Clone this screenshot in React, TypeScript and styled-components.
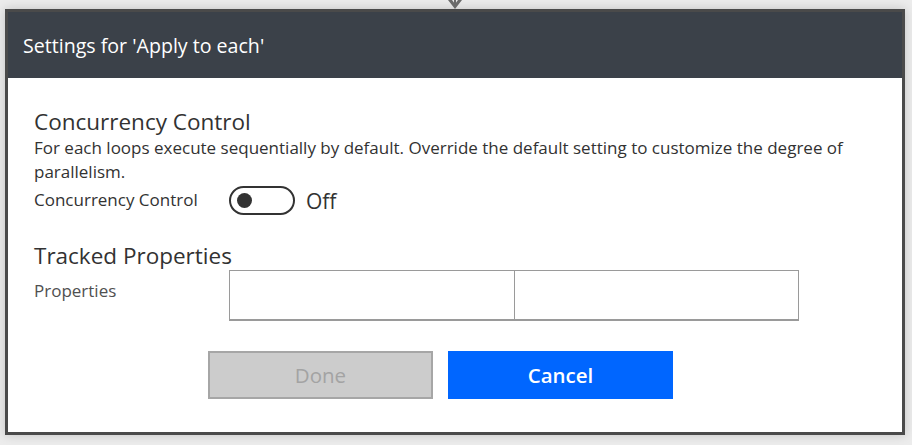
import React from "react";
import styled, { createGlobalStyle } from "styled-components";

const Global = createGlobalStyle`
  html, body { margin: 0; padding: 0; }
  body {
    background: #ececec;
    font-family: "Open Sans", "Noto Sans", sans-serif;
    width: 912px;
    height: 445px;
    overflow: hidden;
  }
`;

const Page = styled.div`
  position: relative;
  width: 912px;
  height: 445px;
  padding: 9px 7px 10px 5px;
  box-sizing: border-box;
`;

const Connector = styled.svg`
  position: absolute;
  left: 447px;
  top: 0;
`;

const Dialog = styled.div`
  width: 900px;
  height: 426px;
  box-sizing: border-box;
  border: 3px solid #4a4a4a;
  background: #fff;
  box-shadow: 0 0 10px rgba(0, 0, 0, 0.18);
  display: flex;
  flex-direction: column;
`;

const Header = styled.div`
  height: 66px;
  flex: none;
  background: #3b4149;
  display: flex;
  align-items: center;
  padding-left: 15px;
  box-sizing: border-box;
  color: #ffffff;
  font-size: 19.6px;
`;

const Body = styled.div`
  padding: 30px 26px 0 26px;
  color: #333;
`;

const SectionTitle = styled.div<{ $top?: number }>`
  font-size: 22.5px;
  line-height: 28px;
  color: #323232;
  margin-top: ${(p) => p.$top ?? 0}px;
`;

const Description = styled.div`
  font-size: 17px;
  line-height: 24px;
  color: #323232;
  width: 840px;
`;

const Row = styled.div<{ $align?: string; $top?: number }>`
  display: flex;
  align-items: ${(p) => p.$align ?? "center"};
  margin-top: ${(p) => p.$top ?? 0}px;
`;

const Label = styled.div<{ $color?: string; $top?: number }>`
  width: 195px;
  flex: none;
  font-size: 17px;
  line-height: 24px;
  color: ${(p) => p.$color ?? "#323232"};
  margin-top: ${(p) => p.$top ?? 0}px;
`;

const Toggle = styled.div`
  width: 66px;
  height: 29px;
  box-sizing: border-box;
  border: 2px solid #333;
  border-radius: 15px;
  display: flex;
  align-items: center;
  padding-left: 6px;
`;

const Knob = styled.div`
  width: 15px;
  height: 15px;
  border-radius: 50%;
  background: #333;
`;

const ToggleText = styled.span`
  font-size: 21px;
  line-height: 29px;
  color: #323232;
  margin-left: 11px;
  margin-top: 3px;
`;

const PropGrid = styled.div`
  display: flex;
`;

const PropCell = styled.div<{ $w: number; $first?: boolean }>`
  width: ${(p) => p.$w}px;
  height: 51px;
  box-sizing: border-box;
  border: 1px solid #9a9a9a;
  border-bottom-width: 2px;
  ${(p) => (p.$first ? "border-right: none;" : "")}
`;

const Buttons = styled.div`
  display: flex;
  gap: 15px;
  padding-left: 174px;
  margin-top: 30px;
`;

const Button = styled.button<{ $primary?: boolean }>`
  width: 225px;
  height: 48px;
  box-sizing: border-box;
  font-family: "Open Sans", "Noto Sans", sans-serif;
  font-size: 20.5px;
  font-weight: ${(p) => (p.$primary ? 600 : 400)};
  border: ${(p) => (p.$primary ? "none" : "2px solid #a6a6a6")};
  background: ${(p) => (p.$primary ? "#0066ff" : "#cccccc")};
  color: ${(p) => (p.$primary ? "#ffffff" : "#a3a3a3")};
  padding: 0;
  cursor: pointer;
`;

export default function App() {
  return (
    <Page>
      <Global />
      <Connector width="16" height="10" viewBox="0 0 16 10">
        <path d="M1 0 L8 9 L15 0 L11 0 L8 4 L5 0 Z" fill="#6b6b6b" />
        <rect x="7" y="0" width="2" height="6" fill="#6b6b6b" />
      </Connector>
      <Dialog>
        <Header>Settings for 'Apply to each'</Header>
        <Body>
          <SectionTitle>Concurrency Control</SectionTitle>
          <Description>
            For each loops execute sequentially by default. Override the default setting to customize the degree of parallelism.
          </Description>
          <Row>
            <Label>Concurrency Control</Label>
            <Toggle>
              <Knob />
            </Toggle>
            <ToggleText>Off</ToggleText>
          </Row>
          <SectionTitle $top={26}>Tracked Properties</SectionTitle>
          <Row $align="flex-start">
            <Label $color="#505050" $top={9}>Properties</Label>
            <PropGrid>
              <PropCell $w={285} $first />
              <PropCell $w={285} />
            </PropGrid>
          </Row>
          <Buttons>
            <Button disabled>Done</Button>
            <Button $primary>Cancel</Button>
          </Buttons>
        </Body>
      </Dialog>
    </Page>
  );
}
